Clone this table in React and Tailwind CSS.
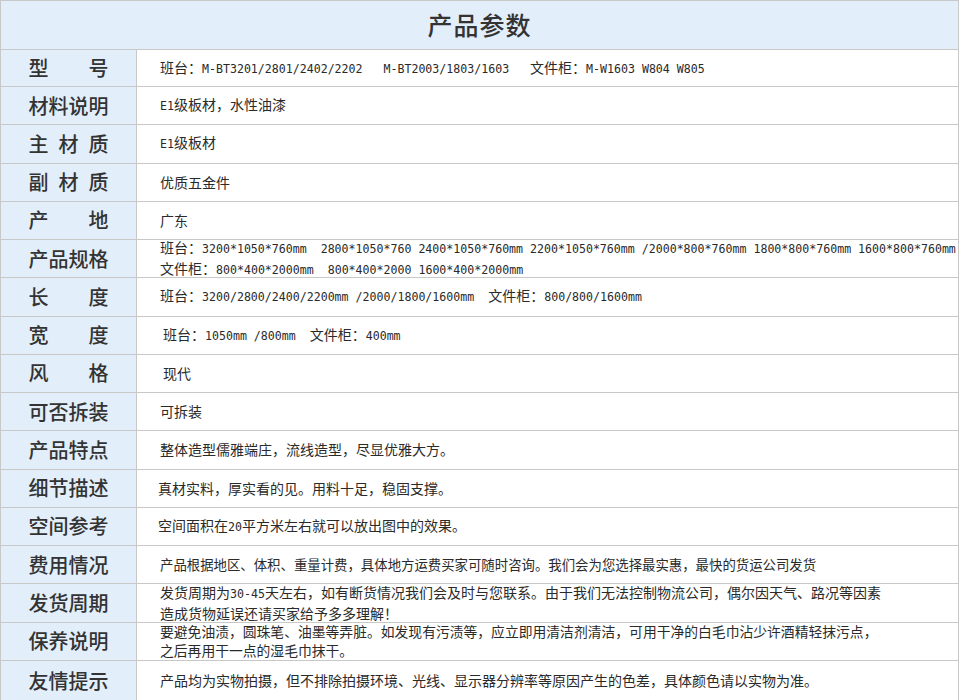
const rows = [
  { label: ['型', '号'], lines: ['班台：M-BT3201/2801/2402/2202   M-BT2003/1803/1603   文件柜：M-W1603 W804 W805'], first: true },
  { label: ['材', '料', '说', '明'], lines: ['E1级板材，水性油漆'] },
  { label: ['主', '材', '质'], lines: ['E1级板材'] },
  { label: ['副', '材', '质'], lines: ['优质五金件'] },
  { label: ['产', '地'], lines: ['广东'] },
  {
    label: ['产', '品', '规', '格'],
    lines: [
      '班台：3200*1050*760mm  2800*1050*760 2400*1050*760mm 2200*1050*760mm /2000*800*760mm 1800*800*760mm 1600*800*760mm',
      '文件柜：800*400*2000mm  800*400*2000 1600*400*2000mm',
    ],
  },
  { label: ['长', '度'], lines: ['班台：3200/2800/2400/2200mm /2000/1800/1600mm  文件柜：800/800/1600mm'] },
  { label: ['宽', '度'], lines: ['班台：1050mm /800mm  文件柜：400mm'], indent: true },
  { label: ['风', '格'], lines: ['现代'], indent: true },
  { label: ['可', '否', '拆', '装'], lines: ['可拆装'] },
  { label: ['产', '品', '特', '点'], lines: ['整体造型儒雅端庄，流线造型，尽显优雅大方。'] },
  { label: ['细', '节', '描', '述'], lines: ['真材实料，厚实看的见。用料十足，稳固支撑。'], tight: true },
  { label: ['空', '间', '参', '考'], lines: ['空间面积在20平方米左右就可以放出图中的效果。'], tight: true },
  { label: ['费', '用', '情', '况'], lines: ['产品根据地区、体积、重量计费，具体地方运费买家可随时咨询。我们会为您选择最实惠，最快的货运公司发货'], size: 'text-[13.4px]' },
  {
    label: ['发', '货', '周', '期'],
    lines: [
      '发货周期为30-45天左右，如有断货情况我们会及时与您联系。由于我们无法控制物流公司，偶尔因天气、路况等因素',
      '造成货物延误还请买家给予多多理解！',
    ],
  },
  {
    label: ['保', '养', '说', '明'],
    lines: [
      '要避免油渍，圆珠笔、油墨等弄脏。如发现有污渍等，应立即用清洁剂清洁，可用干净的白毛巾沾少许酒精轻抹污点，',
      '之后再用干一点的湿毛巾抹干。',
    ],
    size: 'text-[13.8px]',
  },
  { label: ['友', '情', '提', '示'], lines: ['产品均为实物拍摄，但不排除拍摄环境、光线、显示器分辨率等原因产生的色差，具体颜色请以实物为准。'], last: true },
];

// latin runs get a narrow mono face, cjk stays in noto
function Txt({ text }) {
  const parts = text.split(/([\u0000-\u00ff]+)/).filter(Boolean);
  return parts.map((p, i) =>
    /^[\u0000-\u00ff]+$/.test(p) ? (
      <span key={i} className="whitespace-pre font-['DejaVu_Sans_Mono',monospace] text-[11.6px]">
        {p}
      </span>
    ) : (
      <span key={i}>{p}</span>
    )
  );
}

function Row({ row }) {
  const h = row.first ? 'h-[37px]' : row.last ? 'h-[41px]' : 'h-[38.25px]';
  const pad = row.indent ? 'pl-[26px]' : row.tight ? 'pl-[21px]' : 'pl-[23px]';
  const size = row.size || 'text-[14px]';
  return (
    <div className={`flex border-b border-[#c8c8c8] ${h}`}>
      <div className="flex w-[136px] shrink-0 items-center justify-center border-r border-[#c8c8c8] bg-[#e2eef9]">
        <div className="flex w-[80px] justify-between text-[20px] font-medium leading-none text-[#333]">
          {row.label.map((c, i) => (
            <span key={i}>{c}</span>
          ))}
        </div>
      </div>
      <div className={`flex min-w-0 flex-col justify-center whitespace-nowrap leading-[19px] text-[#2a2a2a] ${pad} ${size}`}>
        {row.lines.map((l, i) => (
          <div key={i}>
            <Txt text={l} />
          </div>
        ))}
      </div>
    </div>
  );
}

export default function App() {
  return (
    <div className="h-[700px] w-[960px] overflow-hidden bg-white font-['Noto_Sans_CJK_SC',sans-serif]">
      <div className="w-[959px] border-x border-t border-[#c8c8c8]">
        <div className="flex h-[49px] items-center justify-center border-b border-[#c8c8c8] bg-[#e2eef9] text-[25px] font-medium tracking-[1px] text-[#333]">
          产品参数
        </div>
        {rows.map((r, i) => (
          <Row key={i} row={r} />
        ))}
      </div>
    </div>
  );
}
